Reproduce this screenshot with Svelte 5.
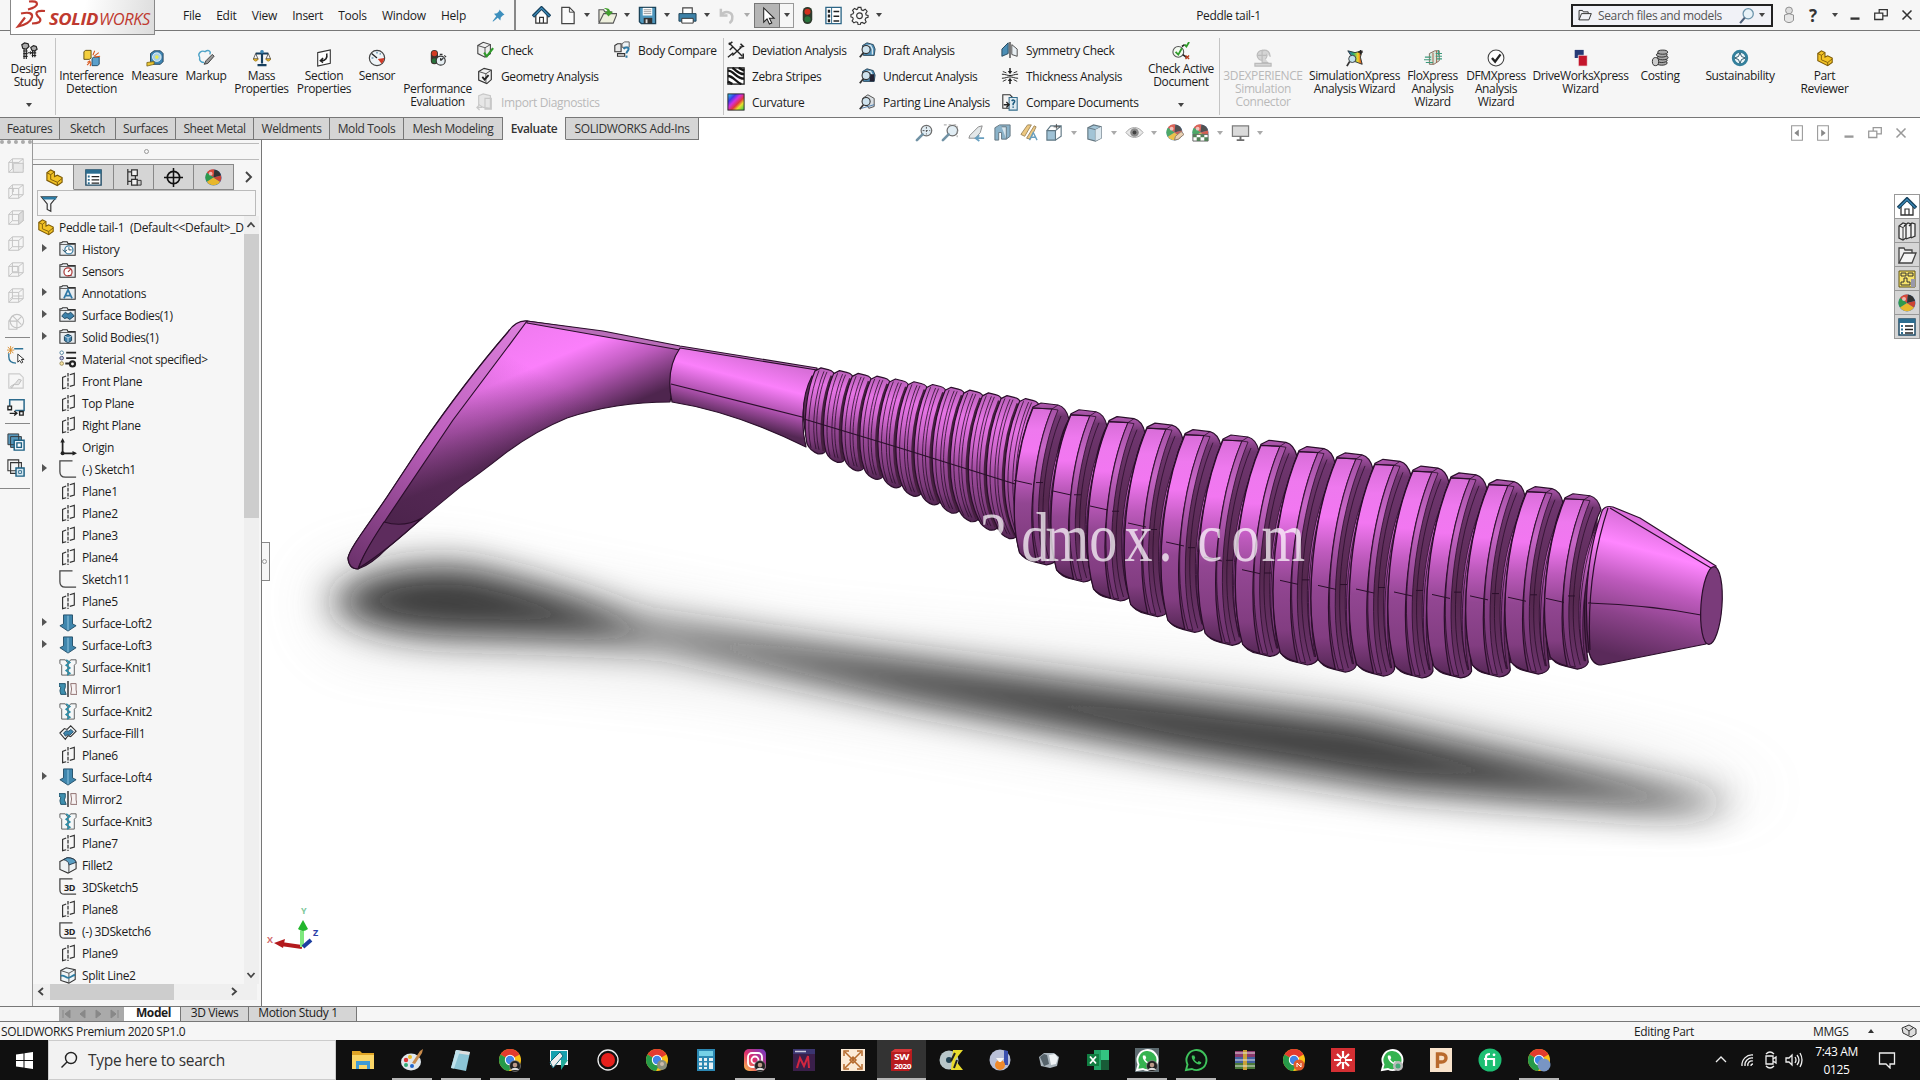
<script>
    const cube = (x) => `<g fill="none" stroke="#c4c4c4" stroke-width="1.1"><path d="M2 6h11v11H2zM6 2h12v11H6zM2 6l4-4M13 6l5-4M13 17l5-4M2 17l4-4"/>${x}</g>`
    const folder = (x) => `<path d="M1 17V3h2l1-1h5l1 2h8v13z" fill="#e9edf0" stroke="#333" stroke-width="1.2"/><path d="M1 5h17" stroke="#555"/>${x}`
    const chrome = (x) => `<circle cx="12" cy="12" r="11" fill="#fbc116"/><path d="M12 12L2.5 6.500A11 11 0 0 1 21.500 6.500z" fill="#e33b2e"/><path d="M12 12L2.500 6.500A11 11 0 0 0 11 23l4.500-8z" fill="#269a49"/><circle cx="12" cy="12" r="5.200" fill="#fff"/><circle cx="12" cy="12" r="4.200" fill="#4285e8"/>${x}`
    const whatsapp = (bg, ring) => `<path d="M2 22l1.500-5.500A10 10 0 1 1 8 21z" fill="${bg}" stroke="${ring}" stroke-width="1.900"/><path d="M8 7.500c-1.500 3 3.500 9 7.500 9 1.500-.3 2-1.500 1.700-2.200l-2.500-1.200-1.200 1.300c-1.500-.6-2.700-2-3.200-3.200l1-1.200-1-2.500z" fill="${ring}"/>`
    const face = `<circle cx="17" cy="18" r="5.500" fill="#222" stroke="#999" stroke-width=".6"/><circle cx="17" cy="17" r="2.300" fill="#b98"/><path d="M13 22c1-3 7-3 8 0z" fill="#ddd"/>`
    const ball = `<circle cx="10" cy="10" r="8.500" fill="#3a78c9"/><path d="M10 10L3 5a8.500 8.500 0 0 1 8-3.500z" fill="#d94a3a"/><path d="M10 10l1-8.500A8.500 8.500 0 0 1 18 8z" fill="#333"/><path d="M10 10L3 5a8.500 8.500 0 0 0 0 9.500z" fill="#2f9a4c"/><path d="M10 10L3 14.500a8.500 8.500 0 0 0 14 0z" fill="#e8b72c"/><path d="M10 10l8-2a8.500 8.500 0 0 1-1 6.500z" fill="#c43"/><circle cx="7" cy="6" r="2" fill="#fff" opacity=".6"/>`
    const part = `<path d="M2 5l4-3 4 2v5l3-1.500 5 2.500v5l-5 3.500L2 13z" fill="#f3c326" stroke="#7d5b08" stroke-width="1.200"/><path d="M2 5l4 2 4-3M6 7v5l7 3 5-4M13 15v3.500" fill="none" stroke="#7d5b08"/>`
    const list = `<path d="M2 2h16v16H2z" fill="#fff" stroke="#1f4b66" stroke-width="1.500"/><path d="M2 2h16v4H2z" fill="#2b6d90"/><path d="M8 9h8M8 12.500h8M8 16h8" stroke="#222" stroke-width="1.300"/><path d="M4 8h2v2H4zM4 11.500h2v2H4zM4 15h2v2H4z" fill="#2b6d90"/>`
    const home = `<path d="M4 9v9h12V9" fill="#fff" stroke="#333" stroke-width="1.300"/><path d="M8 18v-6h4v6" fill="none" stroke="#333" stroke-width="1.200"/><path d="M1 11l9-9 9 9" fill="none" stroke="#17405c" stroke-width="3.600"/><path d="M1.600 10.600L10 2.300l8.400 8.300" fill="none" stroke="#3b8dbd" stroke-width="1.300"/>`
    const lens = `<circle cx="12" cy="8" r="5.600" fill="#dcebf3" stroke="#555" stroke-width="1.300"/><path d="M8 12l-6 6" stroke="#5a8096" stroke-width="2.800" stroke-linecap="round"/>`
    const shape = (x) => `<path d="M5 5l5-3 7 2 2 5-1 7H6z" fill="#4d8db5" stroke="#2a4557"/><path d="M9 5l5 0 2 4v6" fill="none" stroke="#d9e8f0" stroke-width="1.500"/>${x}`
    const glass = `<circle cx="9" cy="9.500" r="4.500" fill="#cfe3ee" stroke="#333" stroke-width="1.200"/><path d="M6 13l-4 5" stroke="#333" stroke-width="2"/>`

    const icons = {
        home, part, list, ball,
        pin: `<path d="M11 2l7 7-2 .5-3 3-.5 4-3.500-3.500L3 18l-1-.5L7 11 4 7.500l4-.5 3-3z" fill="#3d8fbd"/>`,
        newdoc: `<path d="M4 1.500h8l5 5V18.500H4z" fill="#fbfbfb" stroke="#444" stroke-width="1.300"/><path d="M12 1.500v5h5" fill="none" stroke="#444"/>`,
        open: `<path d="M1 17V4h5l1 2h7v2" fill="#e8e8d8" stroke="#555" stroke-width="1.200"/><path d="M1 18l5-10h14l-4 10z" fill="#eef0dd" stroke="#555" stroke-width="1.200"/><path d="M6 2c5 0 6 1 7 4h3l-5 5-4-5h3c0-2-2-3-4-4z" fill="#43a02c"/>`,
        save: `<path d="M1.500 1.500h17v17h-15l-2-2z" fill="#4f97bd" stroke="#1c4359" stroke-width="1.400"/><path d="M5 2h10v8H5z" fill="#fff"/><path d="M6 4h8M6 6h8M6 8h8" stroke="#999"/><path d="M6 12.500h9v6H6z" fill="#333"/><path d="M8 14h2v4H8z" fill="#ddd"/>`,
        print: `<path d="M5 8V2h10v6" fill="#fff" stroke="#444" stroke-width="1.200"/><path d="M1 8h18v8H1z" fill="#3e82a8" stroke="#1f4256"/><path d="M4 13h12v5H4z" fill="#fff" stroke="#333"/>`,
        undo: `<path d="M3 3v7h7M3 10c4-6 13-4 12 3 0 2-1 4-3 5" fill="none" stroke="#c4c4c4" stroke-width="2.600"/>`,
        cursor: `<path d="M6 2v15l3.500-3.500L12 19l2.500-1-2.500-5h5z" fill="#fff" stroke="#222" stroke-width="1.100"/>`,
        traffic: `<rect x="5" y="1" width="10" height="18" rx="5" fill="#2e3a2c"/><circle cx="10" cy="6" r="3.200" fill="#d32f1e"/><circle cx="10" cy="14" r="3.200" fill="#28733b"/>`,
        props: `<path d="M2 1.500h16v17H2z" fill="#fff" stroke="#2d6687" stroke-width="1.400"/><path d="M8 2v16" stroke="#2d6687"/><path d="M4 4h2.500v3H4zM4 9h2.500v3H4zM4 14h2.500v3H4zM10 5h6v1.500h-6zM10 10h6v1.500h-6zM10 15h6v1.500h-6z" fill="#222"/>`,
        gear: `<path d="M8.500 1.500h3l.5 2.500 1.800.8 2.200-1.400 2 2.100L16.500 8l.5 1.500 2 .5v2l-2.300.7-.8 1.800 1.100 2.200-1.900 1.800-2.300-1.200-1.500.5-.6 2H8.600L8 17.300l-1.700-.7-2.200 1.200-1.900-2 1.200-2.200-.6-1.600L1 11.500V9l2.200-.7.700-1.700-1.200-2.100 2-2L6.900 3.800 8 3.300z" fill="#fafafa" stroke="#333" stroke-width="1.200"/><circle cx="10" cy="10.300" r="3" fill="none" stroke="#333" stroke-width="1.200"/>`,
        folder: `<path d="M1.500 17V3.500h5l1 2h7V8M1.500 17L5 8h14l-3.500 9z" fill="none" stroke="#333" stroke-width="1.400"/>`,
        search: `<circle cx="12" cy="8" r="6" fill="#e8f2f8" stroke="#6b94ab" stroke-width="1.500"/><path d="M8 12.500L2.500 19" stroke="#4c5f78" stroke-width="2.600"/>`,
        user: `<circle cx="10" cy="5" r="3.800" fill="#ddd" stroke="#888"/><path d="M5 10q5-3 10 0v6q-5 5-10 0z" fill="#e6e6e6" stroke="#888"/>`,
        study: `<g fill="#aaa" stroke="#222" stroke-width="1.300"><path d="M4.500 7v12M7 7v12M3.500 10h5M3.500 13h5M3.500 16h5"/><path d="M2 3l3-2 4 1 1 3-3 3-4-1z"/><path d="M14 9v8M16.500 9v8M13 12h5M13 15h5"/><path d="M12 6l3-2 3 1 1 3-3 2-3-1z"/></g><path d="M8.500 12h4M11 10.500l2 1.500-2 1.500" fill="none" stroke="#000"/>`,
        interference: `<path d="M1 3l2-1.500h6V10l-2 1.500H1z" fill="#f4cf3e" stroke="#5c4a0d"/><path d="M10 10.500l2-1.500h6v8l-2 1.500h-6z" fill="#5aa0cc" stroke="#1d4763"/><path d="M11 7l2-5M12.500 8l5-4M13 9l6-1M8 13l-3 2M8.500 14l-4 4M9 15l-1 4" stroke="#d9571c" stroke-width="1.200"/>`,
        measure: `<path d="M5 14V5l4-3h7l3 3v9l-3 3H8z" fill="#3f86b5" stroke="#1f3d52"/><circle cx="12" cy="9" r="4.800" fill="#a8d0e6" stroke="#fff" stroke-width=".8"/><circle cx="12" cy="9" r="2" fill="#e8e84e"/><path d="M1 15l8-1v3l-8 2z" fill="#e9c534" stroke="#6b5609" stroke-width=".8"/>`,
        markup: `<path d="M3 9c-3-4 2-8 6-6 4-3 7 0 5 3" fill="none" stroke="#4fa3c7" stroke-width="1.600"/><path d="M3 9c-1 4 2 6 5 6" fill="none" stroke="#4fa3c7" stroke-width="1.600"/><path d="M8 17l2-4 7-7 2 2-7 8z" fill="#999" stroke="#333"/>`,
        mass: `<path d="M10 2v14M3 5h14M5 18h10" stroke="#173f5e" stroke-width="2.400"/><path d="M3 5l-2.500 6h5zM17 5l-2.500 6h5z" fill="none" stroke="#333" stroke-width=".8"/><path d="M0 11h6q-3 5-6 0zM14 11h6q-3 5-6 0z" fill="#e8bb2e" stroke="#7b5a0d" stroke-width=".6"/><circle cx="10" cy="3" r="2" fill="#3d88b6"/>`,
        section: `<path d="M3 4l14-3v15L3 19z" fill="#fff" stroke="#333" stroke-width="1.200"/><path d="M13 5c1 5-1 8-6 8M9 10l-3 3 3 2" fill="none" stroke="#222" stroke-width="1.700"/>`,
        sensor: `<circle cx="10" cy="10" r="8.500" fill="#eef4f7" stroke="#444" stroke-width="1.300"/><path d="M10 10L4 5" stroke="#222" stroke-width="1.400"/><path d="M11 11l7-1a8 8 0 0 1-3 6.500z" fill="#d23b27"/><path d="M4 10h2M10 3v2M14 5l-1 1" stroke="#368" stroke-width="1.200"/>`,
        performance: `<rect x="2" y="1" width="8" height="16" rx="4" fill="#3c332f"/><circle cx="6" cy="5" r="3" fill="#d33b23"/><circle cx="6" cy="13" r="2.800" fill="#28733b"/><circle cx="13" cy="13" r="5" fill="#e6eef2" stroke="#333" stroke-width="1.300"/><path d="M13 13l3-3M13 13v-3M12 6h3M17 7l2 2" stroke="#333" stroke-width="1.300"/>`,
        check: `<path d="M2 5l6-3.500 8 2.500v10l-6 4-8-4z" fill="#eee" stroke="#444" stroke-width="1.200"/><path d="M2 5l8 2.500 6-3.500M10 7.500V18" fill="none" stroke="#444"/><path d="M9 13l3 4 7-9" fill="none" stroke="#2f9b2a" stroke-width="2.400"/>`,
        geometry: `<path d="M3 5l6-3.500 8 2v10.500l-5 4.500-9-4z" fill="#f4f4f4" stroke="#333" stroke-width="1.300"/><path d="M3 5l8 2.500 6-4M11 7.500V18" fill="none" stroke="#444"/><path d="M7 11l2.500 3L14 9" fill="none" stroke="#222" stroke-width="2"/>`,
        importd: `<g fill="#e6e6e6" stroke="#c8c8c8" stroke-width="1.300"><path d="M3 3l5-2 8 2v14l-8-1-5-3zM10 6h7v12h-7z"/><path d="M1 16h6M4 13l-3 3 3 3"/></g>`,
        compare: `<path d="M2 5l3-2h4v9H2zM5 14h8v3H5z" fill="#e8e8e8" stroke="#333" stroke-width="1.200"/><path d="M10 3l3-2h5v6h-8z" fill="#eef3f6" stroke="#555"/><path d="M12 9c1-3 7-2 5 1-1 2-2 2-2 4M15 16v2.500" fill="none" stroke="#2f7ba6" stroke-width="2.200"/>`,
        deviation: `<path d="M2 2l15 15M3 10l4-4M6 16l10-9M1 18l6-5" stroke="#222" stroke-width="1.500"/><path d="M2 4l4-3M15 3l3 3-4 1M18 14v5h-5" fill="none" stroke="#222" stroke-width="1.700"/>`,
        zebra: `<rect x="1" y="1" width="18" height="18" fill="#fff" stroke="#222" stroke-width="1.500"/><path d="M1 4c7 0 9 9 18 9M1 10c6 0 9 7 15 9M6 1c4 2 6 7 13 7M1 16l5 3M13 1l6 3" fill="none" stroke="#151515" stroke-width="2.600"/>`,
        curvature: `<rect x="1" y="1" width="18" height="18" fill="url(#rainbow)" stroke="#222" stroke-width="1"/>`,
        draft: shape(glass), undercut: shape(`<path d="M13 8h5v8h-5z" fill="#223"/>${glass}`), parting: `<path d="M5 6l6-4 7 4v9l-6 2z" fill="#d9dee2" stroke="#444"/><path d="M4 17l14-4" stroke="#47a"/>${glass}`,
        symmetry: `<path d="M1 17V9l7-7v12z" fill="#4b8eb5" stroke="#1f4256"/><path d="M10 1v18" stroke="#222" stroke-width="1.300"/><path d="M12 4l6 5v8l-6-2z" fill="#e8eff3" stroke="#444"/>`,
        thickness: `<path d="M1 8c4 0 6 1.500 9 1.500S15 8 19 8M1 12.500c4 0 6-1.500 9-1.500s5 1.500 9 1.500" fill="none" stroke="#222" stroke-width="1.100"/><path d="M10 1v5M10 19v-5" stroke="#222" stroke-width="1.700"/><path d="M7.500 4.500L10 8l2.500-3.500zM7.500 15.500L10 12l2.500 3.500z" fill="#222"/><path d="M2 5l4 1.500M18 5l-4 1.500M2 16l4-2M18 16l-4-2" stroke="#222"/>`,
        comparedoc: `<path d="M2 2h8l3 3v12H2z" fill="#f4f4f4" stroke="#333" stroke-width="1.200"/><path d="M9 5h9v14H9z" fill="#dfebf1" stroke="#346d8c" stroke-width="1.200"/><path d="M3 13h6M6 10l3 3-3 3" fill="none" stroke="#222" stroke-width="1.500"/><path d="M12 9c1-2 4-1 3 1l-1.500 2v1.500M13.500 15v1.500" fill="none" stroke="#1e5d80" stroke-width="1.700"/>`,
        active: `<circle cx="7" cy="11" r="6" fill="#f3faf1" stroke="#555" stroke-width="1.200"/><path d="M4 11l3 3 4-7" fill="none" stroke="#2f9b2a" stroke-width="2"/><path d="M11 5l3-2M12 14l4 3" stroke="#222" stroke-width="1.700"/><path d="M14 3l2 2 3-5" fill="none" stroke="#2f9b2a" stroke-width="2"/><path d="M15 15l4 4M19 15l-4 4" stroke="#b63a1b" stroke-width="1.500"/>`,
        dexp: `<g fill="#d5d5d5" stroke="#bbb" stroke-width="1.300"><circle cx="9" cy="7" r="5.500"/><path d="M9 1.500c6-1 9 2 9 7M9 7v8h7M1 16h18v3H1zM4 7h10M9 2v10"/></g>`,
        simx: `<path d="M2 2l8 2 8-2-2 7 2 8-8-3z" fill="url(#rainbow2)" stroke="#233"/><path d="M16 1v5M13.500 3.500h5" stroke="#222" stroke-width="1.400"/><circle cx="7" cy="11" r="4" fill="#bfe0ec" stroke="#333"/><path d="M4 14l-3 5" stroke="#333" stroke-width="2"/>`,
        flox: `<path d="M6 5l6-3h5v11l-6 4H6z" fill="#d4e8dd" stroke="#7c6455"/><path d="M10 4v13M14 2v13" stroke="#a2553c"/><path d="M1 9h7M0 12h8M2 15h8M13 5h7M13 8h7M14 11h6M16 1v6" stroke="#3c9a7c" stroke-width="1.200"/>`,
        dfmx: `<circle cx="10" cy="10" r="8.800" fill="#fdfdfd" stroke="#444" stroke-width="1.200"/><path d="M5.500 10l3.500 4 6-8" fill="none" stroke="#222" stroke-width="2.600"/>`,
        drivex: `<path d="M3 1h10v9H3z" fill="#273a76"/><path d="M7 7h10v12H7z" fill="#c4162c" stroke="#f6f6f6" stroke-width=".8"/>`,
        costing: `<g fill="#aaa" stroke="#333" stroke-width="1.100"><ellipse cx="12" cy="15.500" rx="6" ry="2.500"/><ellipse cx="12" cy="12.500" rx="6" ry="2.500"/><ellipse cx="13" cy="9.500" rx="6" ry="2.500"/><ellipse cx="12" cy="6.500" rx="6" ry="2.500"/><ellipse cx="13" cy="3.500" rx="5.500" ry="2.300"/><ellipse cx="5" cy="14" rx="3.500" ry="4.500" fill="#ccc"/></g>`,
        sustain: `<circle cx="10" cy="10" r="7.500" fill="#eef7fa" stroke="#34809c" stroke-width="3.200"/><path d="M10 4l1.700 4.300L16 10l-4.300 1.700L10 16l-1.700-4.300L4 10l4.300-1.700z" fill="#fff" stroke="#17485e"/>`,
        zoomfit: lens + `<path d="M12 4v8M8 8h8" stroke="#333" stroke-dasharray="2 1.500"/>`, zoomarea: lens + `<path d="M3 2h14v13" fill="none" stroke="#888" stroke-dasharray="3 2"/>`,
        prev: `<path d="M3 13l9-9 4-1-2 7-5 6H2z" fill="#e0e4e6" stroke="#777"/><path d="M10 16h8M13 13l-4 3 4 3" fill="none" stroke="#4e8fb5" stroke-width="1.800"/>`,
        sectionv: `<path d="M2 5l5-3h11v12l-4 3H9v-7H6v8H2z" fill="#77a6c1" stroke="#4a5f6b"/><path d="M9 4h5v13" fill="#cfe1eb" stroke="#4a5f6b"/>`,
        dynamic: `<path d="M2 12L9 2h4L6 14zM8 16l8-13 2 1-6 13z" fill="#eabf6a" stroke="#8f7442"/><path d="M11 18l4-8 4 8M12 15h6" fill="none" stroke="#4e8fb5" stroke-width="1.500"/>`,
        orient: `<path d="M2 8h9v10H2z" fill="#8fb8cf" stroke="#44606f" stroke-width="1.200"/><path d="M2 8l4-5h11v11l-6 4M11 8l6-5" fill="none" stroke="#44606f" stroke-width="1.200"/><path d="M12 1v5M9 4h7" stroke="#333"/>`,
        display: `<path d="M3 5l6-3 8 2v12l-6 3-8-2z" fill="#92bad0" stroke="#4a5f6b" stroke-width="1.200"/><path d="M3 5l8 2 6-3M11 7v12" fill="none" stroke="#4a5f6b"/><path d="M11 7l6-3v12l-6 3z" fill="#d7e5ed"/>`,
        eye: `<path d="M1 10c5-7 13-7 18 0-5 7-13 7-18 0z" fill="#e5e5e5" stroke="#999"/><circle cx="10" cy="10" r="4.500" fill="#777"/><circle cx="10" cy="10" r="2" fill="#222"/>`,
        appear: ball + `<path d="M10 18l1-4 6-5 3 3-6 5z" fill="#e7c9a5" stroke="#765"/>`, scene: ball + `<path d="M2 12h16v7H2z" fill="#fff" stroke="#444"/><path d="M2 12h4v3H2zM10 12h4v3h-4zM6 15h4v4H6zM14 15h4v4h-4z" fill="#346b3a"/>`,
        monitor: `<path d="M1.500 3h17v11h-17z" fill="#d4d4d4" stroke="#666" stroke-width="1.300"/><path d="M10 14v3M6 18h8" stroke="#555" stroke-width="2"/>`,
        panel1: `<path d="M4 2h12v16H4z" fill="#fff" stroke="#999" stroke-width="1.200"/><path d="M12 6v8l-5-4z" fill="#888"/>`, panel2: `<path d="M4 2h12v16H4z" fill="#fff" stroke="#999" stroke-width="1.200"/><path d="M8 6v8l5-4z" fill="#888"/>`,
        min: `<path d="M5 14h10" stroke="currentColor" stroke-width="2.600"/>`, restore: `<path d="M3 8h9v7H3zM8 8V4h9v7h-5" fill="none" stroke="currentColor" stroke-width="1.400"/>`, close: `<path d="M5 5l10 10M15 5L5 15" stroke="currentColor" stroke-width="1.700"/>`,
        c1: cube('<path d="M7 7h11v10H7z" fill="#e8e8e8"/>'), c2: cube('<path d="M3 6h4v4"/>'), c3: cube('<path d="M13 6l5-4v11l-5 4z" fill="#ddd"/>'), c4: cube(''), c5: cube('<path d="M6 6h6v6H6z"/>'), c6: cube('<path d="M3 14l4-4h10"/>'), c7: `<g fill="none" stroke="#c4c4c4" stroke-width="1.200"><circle cx="11" cy="9" r="7.500"/><path d="M2 9h9v9H2zM6 3l10 10M11 9l5-5M2 9l4-6"/></g>`,
        exitsk: `<path d="M8 3h10M2 8v4c0 5 3 7 8 7" fill="none" stroke="#2d7397" stroke-width="1.500"/><path d="M4 0v9M0 4.500h8M1 1l6 7M7 1L1 8" stroke="#d88b2a"/><path d="M12 9v9l2-2 2 3 1.500-1-1.500-3h3z" fill="#fff" stroke="#222"/>`,
        repair: `<path d="M2 2h12l4 4v12H2z" fill="none" stroke="#ccc" stroke-width="1.300"/><path d="M4 16l5-3 4-5 3 1-3 5H8l-3 4z" fill="#e3e3e3" stroke="#bbb"/>`,
        screencap: `<path d="M3 9V2h16v12H9" fill="none" stroke="#2d6b8d" stroke-width="1.700"/><path d="M1 9h4v4H1zM14 15h4v4h-4zM3 17h7M8 14.500l3 2.500-3 2.500" fill="none" stroke="#222" stroke-width="1.500"/>`,
        stack1: `<path d="M1 1h12v12H1zM4 4h12v12H4z" fill="#5797bb" stroke="#333"/><path d="M8 8h11v11H8z" fill="#eef5f9" stroke="#1d6083" stroke-width="1.600"/><path d="M11 11h5v5h-5z" fill="#fff" stroke="#1d6083" stroke-width="1.500"/>`,
        stack2: `<path d="M1 1h12v12H1zM4 4h12v12H4z" fill="#f4f4f4" stroke="#333" stroke-width="1.200"/><path d="M10 10h9v9h-9z" fill="#d3e6f0" stroke="#1d6083" stroke-width="1.600"/><path d="M13 13h3v3h-3z" fill="#fff" stroke="#1d6083"/>`,
        config: `<path d="M4 1v17M4 4h5M4 14h5M12 8v8" fill="none" stroke="#333" stroke-width="1.300"/><path d="M8 2h6v6H8zM8 12h6v6H8z" fill="#f2f2f2" stroke="#333" stroke-width="1.300"/><path d="M14 13h4v5h-4z" fill="#ccc" stroke="#333"/>`,
        target: `<circle cx="10" cy="10" r="6.500" fill="none" stroke="#111" stroke-width="1.800"/><path d="M10 0v20M0 10h20" stroke="#111" stroke-width="1.600"/>`,
        filter: `<path d="M1.500 2h17l-6.500 8v8l-4-2v-6z" fill="#f4f6f7" stroke="#333" stroke-width="1.300"/><path d="M2 2h16v3H4z" fill="#2c7ba4"/>`,
        history: folder('<circle cx="11" cy="11" r="4.500" fill="#fff" stroke="#3b7ea4" stroke-width="1.400"/><path d="M11 8v3h3M4 11l2.500 2L9 11" fill="none" stroke="#245"/>'),
        sensors: folder('<circle cx="10" cy="11" r="4.500" fill="#fff" stroke="#a33" stroke-width="1.300"/><path d="M10 11l3-3M10 15h4" stroke="#933" stroke-width="1.300"/>'),
        annot: folder('<path d="M5.500 16L10 6.500 14.500 16M7.300 13h5.400" fill="none" stroke="#2f78a6" stroke-width="1.900"/>'),
        surfb: folder('<path d="M3 11l4-4 3 2 3-2 4 4-5 4-3-2-3 1z" fill="#3d81aa" stroke="#1b4058"/>'),
        solidb: folder('<path d="M6 9l4-2 4 2v5l-4 2.500L6 14z" fill="#3d81aa" stroke="#173a50"/><path d="M6 9l4 2 4-2M10 11v5" fill="none" stroke="#cde"/>'),
        material: `<path d="M8 3h11M8 9h11M7 15h6" stroke="#222" stroke-width="2"/><circle cx="3" cy="3" r="2" fill="#fff" stroke="#4b7f9c"/><circle cx="3" cy="9" r="2" fill="#bcd" stroke="#447"/><circle cx="3" cy="15" r="2" fill="#f4e2a0" stroke="#985"/><circle cx="15" cy="15.500" r="2.800" fill="none" stroke="#222" stroke-width="2.400"/>`,
        plane: `<path d="M8 4.500L4 6v12.500l4-1M12 3l5-1.500v13L12 16" fill="none" stroke="#333" stroke-width="1.300"/><path d="M10 1v18" stroke="#222" stroke-width="1.300" stroke-dasharray="4 1.500"/>`,
        origin: `<path d="M4 3v14h14" fill="none" stroke="#222" stroke-width="1.900"/><path d="M1.500 5L4 0l2.500 5zM15 14.500l5 2.500-5 2.500z" fill="#222"/><circle cx="4" cy="17" r="2.200" fill="#222"/>`,
        sketch: `<path d="M15 1H1v12c0 4 2 6 6 6h12" fill="none" stroke="#444" stroke-width="1.400"/>`,
        sketch3d: `<path d="M15 1H1v12c0 4 2 5 5 5h13" fill="none" stroke="#444" stroke-width="1.400"/><text x="5.500" y="14" font-size="10" font-weight="700" fill="#222">3D</text>`,
        loft: `<path d="M5 1h10v10l4 2-9 6-9-6 4-2z" fill="#3f86ad" stroke="#1f4b64"/><path d="M10 2v16" stroke="#79b3d1" stroke-width="1.600"/>`,
        knit: `<path d="M1 2h6l3 4v13H3V8L1 6zM19 2h-6l-3 4v13h7V8l2-2z" fill="#f5f7f8" stroke="#555"/><path d="M8 2l4 3-4 3 4 3-4 3 4 3-3 2" fill="none" stroke="#2d8ea8" stroke-width="1.800"/>`,
        mirror: `<path d="M0 4h7v4l-1 3 2 5H2l-1-4 1-4-2-1z" fill="#3f8fae" stroke="#1d4f66"/><path d="M10 1v18" stroke="#222" stroke-width="1.500"/><path d="M13 4h6v7l1 5h-7l1-6z" fill="#f7f2f2" stroke="#866"/>`,
        fill: `<path d="M1 10l5-5 3 1 4-4 6 6-6 6-3-1-3 4z" fill="#f4f6f8" stroke="#333" stroke-width="1.200"/><path d="M5 10l3-2.500 3 .5 2-2 3 2.500-4 4-3-.5-2 1.500z" fill="#3f86ad" stroke="#1f4b64"/>`,
        fillet: `<path d="M1 6l8-4c6 0 9 2 10 5v7l-9 5-9-4z" fill="#eef2f4" stroke="#333" stroke-width="1.200"/><path d="M9 2c6 0 9 2 10 5l-8 3C11 6 8 5 5 4z" fill="#5a9fc4" stroke="#234"/><path d="M11 10v9" stroke="#333"/>`,
        split: `<path d="M2 5l6-3 10 2v11l-7 4-9-3z" fill="#eef4f7" stroke="#333" stroke-width="1.200"/><path d="M2 5l9 3 7-4M11 8v11" fill="none" stroke="#444"/><path d="M2 11c4-2 5 3 9 2s4-3 7-3" fill="none" stroke="#2d7ba0" stroke-width="2"/>`,
        library: `<path d="M2 5l4-3 3 1v14l-3 2-4-2zM7 5l4-3 3 1v13l-5 2M12 5l3-3 3 1v12l-4 2" fill="#f2f2f2" stroke="#333" stroke-width="1.300"/><path d="M2 5l4 1.500v12M6 6.500L9 4" fill="none" stroke="#333"/>`,
        explorer: `<path d="M2 18V3h5l1 2h7v3" fill="#eee" stroke="#444" stroke-width="1.300"/><path d="M2 18l5-10h12l-4 10z" fill="#f5f5f5" stroke="#444" stroke-width="1.300"/>`,
        palette: `<path d="M2 2h16v16H2z" fill="#f7e36b" stroke="#5e5313"/><path d="M4 4h5v3H4zM11 4h5v3h-5zM7 9h3v4h3v3H4v-3h3z" fill="#f7e36b" stroke="#333"/><path d="M14 10h4v8h-4z" fill="#99a"/>`,
    }

    const tools = [['home'], ['newdoc', 1], ['open', 1], ['save', 1], ['print', 1], ['undo', 1], ['cursor', 1], ['traffic'], ['props'], ['gear', 1]]
    const menus = ['File', 'Edit', 'View', 'Insert', 'Tools', 'Window', 'Help']
    const ribbon = [
        { w: 53, icon: 'study', label: 'Design\nStudy', high: true, caret: true },
        { sep: true },
        { w: 71, icon: 'interference', label: 'Interference\nDetection' },
        { w: 55, icon: 'measure', label: 'Measure' },
        { w: 48, icon: 'markup', label: 'Markup' },
        { w: 63, icon: 'mass', label: 'Mass\nProperties' },
        { w: 62, icon: 'section', label: 'Section\nProperties' },
        { w: 44, icon: 'sensor', label: 'Sensor' },
        { w: 77, icon: 'performance', label: '\nPerformance\nEvaluation' },
        { w: 137, rows: [['check', 'Check'], ['geometry', 'Geometry Analysis'], ['importd', 'Import Diagnostics', true]] },
        { w: 110, rows: [['compare', 'Body Compare']] },
        { sep: true },
        { w: 131, rows: [['deviation', 'Deviation Analysis'], ['zebra', 'Zebra Stripes'], ['curvature', 'Curvature']], inset: true },
        { w: 143, rows: [['draft', 'Draft Analysis'], ['undercut', 'Undercut Analysis'], ['parting', 'Parting Line Analysis']], inset: true },
        { w: 145, rows: [['symmetry', 'Symmetry Check'], ['thickness', 'Thickness Analysis'], ['comparedoc', 'Compare Documents']], inset: true },
        { w: 76, icon: 'active', label: 'Check Active\nDocument', high: true, caret: true },
        { sep: true },
        { w: 86, icon: 'dexp', label: '3DEXPERIENCE\nSimulation\nConnector', off: true },
        { w: 97, icon: 'simx', label: 'SimulationXpress\nAnalysis Wizard' },
        { w: 59, icon: 'flox', label: 'FloXpress\nAnalysis\nWizard' },
        { w: 68, icon: 'dfmx', label: 'DFMXpress\nAnalysis\nWizard' },
        { w: 101, icon: 'drivex', label: 'DriveWorksXpress\nWizard' },
        { w: 58, icon: 'costing', label: 'Costing' },
        { w: 102, icon: 'sustain', label: 'Sustainability' },
        { w: 67, icon: 'part', label: 'Part\nReviewer' },
    ]
    const tabs = [['Features', 60], ['Sketch', 56], ['Surfaces', 60], ['Sheet Metal', 78], ['Weldments', 76], ['Mold Tools', 74], ['Mesh Modeling', 99], ['Evaluate', 63], ['SOLIDWORKS Add-Ins', 133]]
    const hud = [['zoomfit'], ['zoomarea'], ['prev'], ['sectionv'], ['dynamic'], ['orient', 1], ['display', 1], ['eye', 1], ['appear'], ['scene', 1], ['monitor', 1]]
    const tree = [
        ['history', 'History', 1], ['sensors', 'Sensors'], ['annot', 'Annotations', 1], ['surfb', 'Surface Bodies(1)', 1], ['solidb', 'Solid Bodies(1)', 1],
        ['material', 'Material <not specified>'], ['plane', 'Front Plane'], ['plane', 'Top Plane'], ['plane', 'Right Plane'], ['origin', 'Origin'],
        ['sketch', '(-) Sketch1', 1], ['plane', 'Plane1'], ['plane', 'Plane2'], ['plane', 'Plane3'], ['plane', 'Plane4'], ['sketch', 'Sketch11'], ['plane', 'Plane5'],
        ['loft', 'Surface-Loft2', 1], ['loft', 'Surface-Loft3', 1], ['knit', 'Surface-Knit1'], ['mirror', 'Mirror1'], ['knit', 'Surface-Knit2'], ['fill', 'Surface-Fill1'],
        ['plane', 'Plane6'], ['loft', 'Surface-Loft4', 1], ['mirror', 'Mirror2'], ['knit', 'Surface-Knit3'], ['plane', 'Plane7'], ['fillet', 'Fillet2'],
        ['sketch3d', '3DSketch5'], ['plane', 'Plane8'], ['sketch3d', '(-) 3DSketch6'], ['plane', 'Plane9'], ['split', 'Split Line2'],
    ]

    // taskbar: [svg, underline, active]
    const apps = [
        ['<path d="M1 3h8l2 2h12v4H1z" fill="#e0a526"/><path d="M1 7h22v14H1z" fill="#fbd667"/><path d="M5 13h14v8h-3v-4H8v4H5z" fill="#3f9bd6"/>'],
        ['<ellipse cx="11" cy="14" rx="10" ry="8.500" fill="#dfe7ec"/><circle cx="6" cy="12" r="2.200" fill="#d33"/><circle cx="10" cy="9" r="2" fill="#e9bd2a"/><circle cx="6" cy="17" r="2" fill="#3a7"/><circle cx="12" cy="18" r="2" fill="#26c"/><path d="M12 15L20 3l3-2-1 4-7 11z" fill="#c98b4b"/>', 1],
        ['<path d="M7 2l14 2-4 19-15-3z" fill="#8cc5d6"/><path d="M7 2l14 2-1 3-14-2z" fill="#ddd"/><path d="M7 2L2 20l3 .6L11 3z" fill="#bfe2ec"/>', 1],
        [chrome(face), 1],
        ['<path d="M3 2h18v15H3z" fill="#f3f7f9"/><path d="M4 3h16v9H4z" fill="#15a0ae"/><path d="M3 14L13 4l3 4L6 20z" fill="#eee" stroke="#167" /><path d="M14 12h7l-7 10z" fill="#2a9"/>'],
        ['<circle cx="12" cy="12" r="10" fill="#111" stroke="#eee" stroke-width="1.300"/><circle cx="12" cy="12" r="7" fill="#e5201c"/>'],
        [chrome('<circle cx="17" cy="17" r="5" fill="#8a8f7c"/><circle cx="17" cy="16" r="2" fill="#cba"/>')],
        ['<path d="M3 1h18v22H3z" fill="#2b87b2"/><path d="M5 3h14v5H5z" fill="#75d0e6"/><g fill="#e9f1f4"><path d="M5 10h3v3H5zM10 10h3v3h-3zM15 10h4v3h-4zM5 14.500h3v3H5zM10 14.500h3v3h-3zM15 14.500h4V21h-4zM5 19h3v2H5zM10 19h3v2h-3z"/></g>'],
        ['<rect x="1" y="1" width="22" height="22" rx="5" fill="url(#insta)"/><rect x="5" y="5" width="14" height="14" rx="4" fill="none" stroke="#fff" stroke-width="1.800"/><circle cx="12" cy="12" r="3.500" fill="none" stroke="#fff" stroke-width="1.800"/>' + face, 1],
        ['<path d="M1 1h22v22H1z" fill="#3a1f4a"/><path d="M1 1h22v5H1z" fill="#3b3570"/><path d="M3 3.500h11" stroke="#ccd" stroke-width="1.500"/><path d="M5 20l3-10 4 8 4-10 1 12" fill="none" stroke="#d3263f" stroke-width="2"/>'],
        ['<path d="M0 1h24v22H0z" fill="#fbead6"/><path d="M4 4l16 16M20 4L4 20" stroke="#b56a2d" stroke-width="1.500"/><path d="M3 8V3h5M16 3h5v5M21 16v5h-5M8 21H3v-5M9 12l3-3 3 3-3 3z" fill="none" stroke="#b56a2d" stroke-width="1.500"/>'],
        ['<path d="M1 4l4-3h17v18l-3 4H1z" fill="#b81c1e"/><path d="M1 4l4-3h17l-3 3z" fill="#d8383a"/><text x="4" y="11.500" font-size="9" font-weight="700" fill="#fff" textLength="15" lengthAdjust="spacingAndGlyphs">SW</text><text x="4" y="21" font-size="6.500" font-weight="700" fill="#fff" textLength="17" lengthAdjust="spacingAndGlyphs">2020</text>', 1, 1],
        ['<circle cx="10" cy="12" r="9.500" fill="#b8c6c9"/><circle cx="10" cy="12" r="3" fill="#245"/><path d="M14 2l10 0-8 10 8 10H12z" fill="#e8db2c"/><path d="M16 5l-4 8M18 12l-3 8" stroke="#222" stroke-width="2"/>'],
        ['<circle cx="12" cy="12" r="10.500" fill="#b9c0d8"/><path d="M16 2l4 1v14h-4z" fill="#3a4fae"/><circle cx="12" cy="17" r="5" fill="#f08a2c"/><path d="M8 10h8l-3 4h-2z" fill="#f6f6f6"/>'],
        ['<path d="M2 9l5-4h10l5 4-2 9-7 2-9-2z" fill="#aab5bd"/><path d="M3 9l4-3 3 1 2 9-5 2z" fill="#56636b"/><path d="M12 7l6-1 3 4-2 6-5 1z" fill="#eef2f4"/>'],
        ['<path d="M8 2h15v20H8z" fill="#21a366"/><path d="M15 2h8v10h-8z" fill="#33c481"/><path d="M15 12h8v10h-8z" fill="#185c37"/><path d="M1 6h12v12H1z" fill="#107c41"/><path d="M4 8.500l6 7M10 8.500l-6 7" stroke="#fff" stroke-width="1.800"/>'],
        ['<path d="M0 0h24v24H0z" fill="#5d6b70"/>' + whatsapp('#35b350', '#fff') + face, 1],
        [whatsapp('#0c1410', '#3fc35c'), 1],
        ['<path d="M2 3h20v6H2z" fill="#8b3a6c"/><path d="M2 9h20v6H2z" fill="#43609f"/><path d="M2 15h20v6H2z" fill="#4c7a3c"/><path d="M10 2h4v20h-4z" fill="#c9a13a"/><path d="M2 5h20M2 12h20M2 18h20" stroke="#eee" stroke-width=".9"/>'],
        [chrome('<circle cx="17" cy="17" r="5.500" fill="#e05a2b"/><path d="M15 19v-4l4 4v-4" fill="none" stroke="#fff"/>')],
        ['<path d="M0 0h24v24H0z" fill="#d42f33"/><path d="M12 3v18M3 12h18M6 6l12 12M18 6L6 18" stroke="#fff" stroke-width="2.200" stroke-dasharray="7 4"/><circle cx="12" cy="12" r="2" fill="#d42f33"/>'],
        [whatsapp('#35b350', '#fff') + '<circle cx="18" cy="18" r="5" fill="#bbb"/><circle cx="18" cy="18" r="2.500" fill="#4a7"/>'],
        ['<path d="M1 0h22v24H1z" fill="#f8e3cb"/><path d="M8.500 20V6h4c6 0 6 8 0 8h-4" fill="none" stroke="#b96a2c" stroke-width="3.400"/>'],
        ['<circle cx="12" cy="12" r="11.500" fill="#1dbf73"/><path d="M8 18V9c0-3 2-3 4-3M6 11h10v7" fill="none" stroke="#fff" stroke-width="2.200"/><circle cx="16" cy="6.800" r="1.400" fill="#fff"/>'],
        [chrome('<circle cx="17" cy="17" r="6.500" fill="#7895c4"/>'), 1],
    ]

    const lerp = (a, b, t) => a + (b - a) * t
    // interpolate a silhouette given as [x, y] points
    function along(pts, x) {
        let i = 1
        while (i < pts.length - 1 && pts[i][0] < x) i++
        const [a, b] = [pts[i - 1], pts[i]]
        return lerp(a[1], b[1], (x - a[0]) / (b[0] - a[0]))
    }
    const topEdge = [[816, 369], [1010, 398], [1053, 405], [1125, 418], [1201, 431], [1280, 442], [1393, 461], [1505, 481], [1575, 494]]
    const bottomEdge = [[811, 448], [1013, 540], [1043, 563], [1085, 582], [1123, 601], [1162, 617], [1198, 632], [1236, 645], [1273, 656], [1313, 665], [1350, 672], [1387, 676], [1425, 678], [1463, 678], [1503, 677], [1543, 674], [1580, 669]]
    const midEdge = [[810, 419], [900, 450], [1013, 483], [1060, 496], [1120, 522], [1180, 552], [1270, 582], [1330, 590], [1420, 597], [1500, 600], [1600, 603]]

    const arc = (x, t, b, lean) => `C${x - (b - t) * 0.115} ${lerp(t, b, 0.27)} ${x - (b - t) * 0.17} ${lerp(t, b, 0.72)} ${x - lean} ${b}`
    const back = (x, t, b, lean) => `C${x - (b - t) * 0.17} ${lerp(t, b, 0.72)} ${x - (b - t) * 0.115} ${lerp(t, b, 0.27)} ${x} ${t}`

    const big = Array.from({ length: 15 }, (_, i) => {
        const x = 1047 + i * 38
        const t = along(topEdge, x)
        const b = along(bottomEdge, x)
        const l = (b - t) * 0.09 - 1
        const x0 = x - 14
        return {
            body: `M${x0} ${t + 3}${arc(x0, t + 3, b - 13, l)}Q${x0 - l + 4} ${b - 5} ${x0 - l + 15} ${b - 3}L${x0 - l + 27} ${b}Q${x0 - l + 36} ${b - 1} ${x0 - l + 38} ${b - 7}C${x0 + 16} ${lerp(t, b, 0.72)} ${x0 + 19} ${lerp(t, b, 0.27)} ${x0 + 36} ${t + 15}Q${x0 + 33} ${t + 3} ${x0 + 25} ${t + 1}L${x0 + 8} ${t - 1}Z`,
            face: `M${x0} ${t + 4}${arc(x0, t + 4, b - 12, l)}Q${x0 - l + 5} ${b - 6} ${x0 - l + 17} ${b - 3}${back(x0 + 19, t + 5, b - 3, l)}Z`,
            lip: `M${x0 + 19} ${t + 5}${arc(x0 + 19, t + 5, b - 3, l - 1)}L${x0 - l + 25} ${b - 2}${back(x0 + 25, t + 6, b - 2, l)}Z`,
            floor: `M${x0 + 31} ${t + 32}${arc(x0 + 31, t + 28, b - 8, l - 4)}L${x0 - l + 35} ${b - 9}${back(x0 + 37, t + 27, b - 9, l)}Q${x0 + 33} ${t + 26} ${x0 + 31} ${t + 32}Z`,
            lines: `M${x0 + 33} ${t + 29}${arc(x0 + 33, t + 29, b - 8, l - 1)}M${x0 + 28} ${t + 12}${arc(x0 + 28, t + 12, b - 4, l - 2)}M${x0} ${t + 4}L${x0 + 19} ${t + 5}L${x0 + 25} ${t + 1}`,
            mid: `M${x0 - 19} ${along(midEdge, x0 - 19) - 3}l18 4M${x0 + 3} ${along(midEdge, x0) - 6}h7`,
        }
    })
    const small = Array.from({ length: 12 }, (_, i) => {
        const x = 815 + i * 18.6
        const t = along(topEdge, x)
        const b = along(bottomEdge, x)
        const l = 8 - i * 0.5
        return {
            body: `M${x} ${t + 2}${arc(x, t + 2, b - 6, l)}Q${x - l + 3} ${b + 1} ${x - l + 11} ${b + 4}Q${x - l + 18} ${b + 5} ${x - l + 19} ${b - 1}L${x + 21} ${t + 9}Q${x + 19} ${t + 2} ${x + 14} ${t + 1}L${x + 6} ${t - 1}Z`,
            lines: [4, 9, 12].map((d) => `M${x + d} ${t + 1 + d / 6}${arc(x + d, t + 2, b + d / 4 - 3, l)}`).join(''),
            dark: `M${x + 17} ${t + 7}${arc(x + 17, t + 7, b + 1, l)}`,
        }
    })
</script>

{#snippet icon(name, size = 20)}
    <svg class="icon" width={size} height={size} viewBox="0 0 20 20">{@html icons[name]}</svg>
{/snippet}

<div class="app">
    <svg class="defs" width="0" height="0">
        <defs>
            <linearGradient id="rainbow" x1="0" y1="0" x2="1" y2="1"><stop offset="0" stop-color="#23d5e8" /><stop offset=".25" stop-color="#3b39e8" /><stop offset=".42" stop-color="#d22fe0" /><stop offset=".6" stop-color="#e3363a" /><stop offset=".75" stop-color="#e8df2f" /><stop offset="1" stop-color="#2ccf46" /></linearGradient>
            <linearGradient id="rainbow2"><stop offset="0" stop-color="#2d4fc9" /><stop offset=".4" stop-color="#2db36b" /><stop offset=".7" stop-color="#f0d52a" /><stop offset="1" stop-color="#d92f1e" /></linearGradient>
            <linearGradient id="insta" x1="0" y1="1" x2="1" y2="0"><stop offset="0" stop-color="#fdc84c" /><stop offset=".45" stop-color="#e1306c" /><stop offset="1" stop-color="#6a3cc8" /></linearGradient>
        </defs>
    </svg>

    <header class="titlebar">
        <div class="logo">
            <svg width="143" height="33" viewBox="10 0 143 33">
                <g fill="none" stroke="#c0392f" stroke-width="2.200">
                    <path d="M28 1.500q8-1 8 2.500 0 3-9 5.500" />
                    <path d="M20 13.500q12-2.500 11 3.500-2 7-14 9.500l7-9" />
                    <path d="M44 11q-9-1-8.500 3 .5 2 3.500 4.500 2 5-8 5" />
                </g>
                <g fill="#bf3a30" font-size="16.500" font-style="italic">
                    <text x="48" y="25" font-weight="700" textLength="49" lengthAdjust="spacingAndGlyphs">SOLID</text>
                    <text x="98" y="25" textLength="51" lengthAdjust="spacingAndGlyphs">WORKS</text>
                </g>
            </svg>
        </div>
        <nav class="menus">
            {#each menus as m}<span>{m}</span>{/each}
        </nav>
        <div class="pin">{@render icon('pin', 15)}</div>
        <div class="quick">
            {#each tools as [name, caret]}
                <div class="tool" class:selected={name === 'cursor'}>
                    <span class="cell">{@render icon(name, 19)}</span>
                    {#if caret}<i class="caret" class:dim={name === 'undo'}></i>{/if}
                </div>
            {/each}
        </div>
        <div class="doc-title">Peddle tail-1</div>
        <div class="search">
            {@render icon('folder', 14)}
            <span>Search files and models</span>
            {@render icon('search', 17)}
            <i class="caret"></i>
        </div>
        <div class="win">
            {@render icon('user', 18)}
            <b>?</b>
            <i class="caret"></i>
            {@render icon('min', 18)}
            {@render icon('restore', 18)}
            {@render icon('close', 18)}
        </div>
    </header>

    <section class="ribbon">
        {#each ribbon as item}
            {#if item.sep}
                <div class="sep"></div>
            {:else if item.rows}
                <div class="stack" class:inset={item.inset} style:width="{item.w}px">
                    {#each item.rows as [name, label, off]}
                        <div class="stack-row" class:off>{@render icon(name, 18)}<span>{label}</span></div>
                    {/each}
                </div>
            {:else}
                <div class="command" class:high={item.high} class:off={item.off} style:width="{item.w}px">
                    {@render icon(item.icon, 18)}
                    <span class="command-label">{item.label}</span>
                    {#if item.caret}<i class="caret"></i>{/if}
                </div>
            {/if}
        {/each}
    </section>

    <div class="tabs">
        {#each tabs as [label, w]}
            <div class="tab" class:current={label === 'Evaluate'} style:width="{w}px">{label}</div>
        {/each}
        <div class="tabs-rest"></div>
    </div>

    <main class="workspace">
        <aside class="strip">
            {#each ['c1', 'c2', 'c3', 'c4', 'c5', 'c6', 'c7'] as c}<div>{@render icon(c, 18)}</div>{/each}
            <hr />
            {#each ['exitsk', 'repair', 'screencap'] as c}<div>{@render icon(c, 18)}</div>{/each}
            <hr class="lower" />
            {#each ['stack1', 'stack2'] as c}<div>{@render icon(c, 18)}</div>{/each}
            <hr class="wide" />
        </aside>

        <aside class="panel">
            <div class="grip"><span></span></div>
            <div class="panel-tabs">
                {#each ['part', 'list', 'config', 'target', 'ball'] as name, i}
                    <div class="panel-tab" class:current={i === 0}>{@render icon(name, 19)}</div>
                {/each}
                <svg class="more" width="26" height="26" viewBox="0 0 26 26"><path d="M11 8l5 5-5 5" fill="none" stroke="#444" stroke-width="1.900" /></svg>
            </div>
            <div class="filter">{@render icon('filter', 18)}</div>
            <div class="tree-wrap">
                <div class="tree">
                    <div class="root">{@render icon('part', 18)}<span>Peddle tail-1&nbsp; (Default&lt;&lt;Default&gt;_D</span></div>
                    {#each tree as [name, label, open]}
                        <div class="node">
                            <span class="arrow">{#if open}<i></i>{/if}</span>
                            {@render icon(name, 18)}
                            <span>{label}</span>
                        </div>
                    {/each}
                </div>
                <div class="vbar">
                    <svg width="14" height="18" viewBox="0 0 14 18"><path d="M3.500 11L7 7l3.500 4" fill="none" stroke="#444" stroke-width="1.800" /></svg>
                    <div class="vthumb"></div>
                    <svg width="14" height="18" viewBox="0 0 14 18"><path d="M3.500 7L7 11l3.500-4" fill="none" stroke="#444" stroke-width="1.800" /></svg>
                </div>
            </div>
            <div class="hbar">
                <svg width="16" height="15" viewBox="0 0 16 15"><path d="M10 4L6 7.500 10 11" fill="none" stroke="#444" stroke-width="1.800" /></svg>
                <div class="hthumb"></div>
                <svg width="16" height="15" viewBox="0 0 16 15"><path d="M6 4l4 3.500L6 11" fill="none" stroke="#444" stroke-width="1.800" /></svg>
            </div>
        </aside>

        <section class="viewport">
            <svg class="scene" width="1658" height="866" viewBox="262 140 1658 866">
                <defs>
                    <filter id="soft" x="-20%" y="-60%" width="140%" height="220%"><feGaussianBlur stdDeviation="18" /></filter>
                    <filter id="softer" x="-20%" y="-60%" width="140%" height="220%"><feGaussianBlur stdDeviation="32" /></filter>
                    <linearGradient id="face" x1="0" y1="0" x2="0" y2="1"><stop offset="0" stop-color="#d86dd8" /><stop offset=".14" stop-color="#ee79ee" /><stop offset=".28" stop-color="#f277f1" /><stop offset=".45" stop-color="#bd5abc" /><stop offset=".62" stop-color="#924692" /><stop offset=".85" stop-color="#823d81" /><stop offset="1" stop-color="#562856" /></linearGradient>
                    <linearGradient id="faceSmall" x1="0" y1="0" x2="0" y2="1"><stop offset="0" stop-color="#b75fb7" /><stop offset=".2" stop-color="#e674e5" /><stop offset=".38" stop-color="#cf66ce" /><stop offset=".58" stop-color="#9c4a9b" /><stop offset=".85" stop-color="#7b3a7a" /><stop offset="1" stop-color="#522652" /></linearGradient>
                    <linearGradient id="lip" x1="0" y1="0" x2="0" y2="1"><stop offset="0" stop-color="#a551a5" /><stop offset=".25" stop-color="#c766c6" /><stop offset=".6" stop-color="#873f87" /><stop offset="1" stop-color="#6d336d" /></linearGradient>
                    <linearGradient id="side" x1="0" y1="0" x2="0" y2="1"><stop offset="0" stop-color="#b65bb6" /><stop offset=".08" stop-color="#703670" /><stop offset=".6" stop-color="#55284f" /><stop offset="1" stop-color="#6b336b" /></linearGradient>
                    <linearGradient id="tail" gradientUnits="userSpaceOnUse" x1="518" y1="322" x2="565" y2="432"><stop offset="0" stop-color="#ee7aee" /><stop offset=".4" stop-color="#fb7ffb" /><stop offset=".65" stop-color="#bf5cbf" /><stop offset="1" stop-color="#4e254e" /></linearGradient>
                    <linearGradient id="tailLow" gradientUnits="userSpaceOnUse" x1="500" y1="350" x2="395" y2="535"><stop offset="0" stop-color="#5a2b5a" stop-opacity="0" /><stop offset=".6" stop-color="#5a2b5a" stop-opacity=".5" /><stop offset="1" stop-color="#4a224a" stop-opacity=".8" /></linearGradient>
                    <linearGradient id="rim" gradientUnits="userSpaceOnUse" x1="520" y1="320" x2="352" y2="565"><stop offset="0" stop-color="#dc7fdc" /><stop offset=".5" stop-color="#bd60bd" /><stop offset="1" stop-color="#6c326c" /></linearGradient>
                    <linearGradient id="neck" gradientUnits="userSpaceOnUse" x1="752" y1="357" x2="735" y2="421"><stop offset="0" stop-color="#d96fd9" /><stop offset=".35" stop-color="#fb80fb" /><stop offset=".7" stop-color="#b153b1" /><stop offset="1" stop-color="#542854" /></linearGradient>
                    <linearGradient id="head" gradientUnits="userSpaceOnUse" x1="1675" y1="530" x2="1640" y2="662"><stop offset="0" stop-color="#dd70dd" /><stop offset=".2" stop-color="#ff86ff" /><stop offset=".46" stop-color="#bd5abc" /><stop offset=".7" stop-color="#8c438b" /><stop offset="1" stop-color="#5a2a5a" /></linearGradient>
                </defs>

                <path d="M315 590Q400 545 520 585L800 640L1250 680L1600 750L1780 795L1500 790L1100 745L700 675L340 640Z" fill="#888" opacity=".28" filter="url(#softer)" />
                <path d="M328 602Q380 560 470 568Q560 588 640 622L860 654L1110 688L1360 720L1560 766L1735 803Q1700 816 1600 805L1400 789L1180 753L900 698L660 644Q560 638 460 636Q370 634 328 602Z" fill="#1c1c1c" opacity=".86" filter="url(#soft)" />

                <g stroke="#2b0f2b" stroke-width="1.200" stroke-linejoin="round">
                    <path d="M527 321Q516 321 508 332C470 376 440 418 420 447L387 497C366 528 350 548 348 558Q349 569 358 569Q372 564 387 548L420 520L460 487Q480 473 503 455Q533 432 567 418Q615 402 670 402L680 347L603 332Z" fill="url(#tail)" />
                    <path d="M527 321Q516 321 508 332C470 376 440 418 420 447L387 497L348 558Q349 569 358 569Q372 564 420 520L460 487Q480 473 503 455Q533 432 567 418L620 400L680 347Z" fill="url(#tailLow)" stroke="none" />
                    <path d="M527 321Q516 320 508 332C470 376 440 418 420 447L387 497C366 528 350 548 348 558Q349 569 358 569Q360 560 387 518L453 420L507 348Z" fill="url(#rim)" />
                    <path d="M384 522Q404 528 422 518Q385 552 359 568Q361 557 384 522Z" fill="#5d2c5d" />
                    <path d="M527 321L603 331L680 346L817 368L817 371L680 350L527 323Z" fill="#b96db9" />
                    <path d="M680 348L817 370Q796 405 806 447Q735 412 672 402Q665 370 680 348Z" fill="url(#neck)" />
                    <path d="M671 384L806 418" fill="none" />
                    <path d="M812 376L1034 412L1060 545L1018 538L808 443Q797 405 812 376Z" fill="#5e2e5a" />
                    <path d="M1020 416L1280 460L1598 514L1592 652L1540 662L1440 666L1340 656L1240 632L1140 596L1030 545Z" fill="#502650" stroke="none" />
                    {#each small as r}
                        <path d={r.body} fill="url(#faceSmall)" />
                        <path d={r.dark} fill="none" stroke="#45203f" stroke-width="3" />
                        <path d={r.lines} fill="none" stroke-width=".8" />
                    {/each}
                    <path d="M804 419L900 448L1015 484" fill="none" />
                    {#each big as r}
                        <path d={r.body} fill="url(#side)" />
                        <path d={r.floor} fill="url(#lip)" stroke-width=".8" />
                        <path d={r.face} fill="url(#face)" />
                        <path d={r.lip} fill="url(#lip)" stroke-width=".8" />
                        <path d={r.lines} fill="none" stroke-width=".8" />
                        <path d={r.mid} fill="none" stroke-width="1" />
                    {/each}
                    <path d="M1602 511Q1605 505 1613 507L1640 518L1716 566L1706 644L1601 665Q1592 665 1589 652Q1580 575 1602 511Z" fill="url(#head)" />
                    <path d="M1608 508Q1586 575 1590 650M1588 603Q1650 605 1701 615M1610 508L1711 568" fill="none" />
                    <ellipse cx="1711.500" cy="605.500" rx="10.500" ry="39" transform="rotate(4 1711 605)" fill="#7a3b7a" />
                </g>

                <text class="watermark" transform="scale(.8 1)" y="561" x="1242 1294 1334 1379 1423 1457 1481 1512 1557 1604">3dmox. com</text>

                <g class="triad">
                    <path d="M302 947L281 944" stroke="#b3191c" stroke-width="4" /><path d="M274 943l11-4-2 9z" fill="#b3191c" />
                    <path d="M302 947V931" stroke="#7ee87e" stroke-width="4" /><path d="M298 929l5-9 5 9q-5 4-10 0z" fill="#22b62c" />
                    <path d="M303 947l8-7" stroke="#1c3fa0" stroke-width="4" />
                    <text x="267" y="943" fill="#d26a6a">X</text><text x="301" y="914" fill="#7cc79a">Y</text><text x="313" y="936" fill="#2c3fa8">Z</text>
                </g>
            </svg>
            <div class="hud">
                {#each hud as [name, caret]}
                    <span class="cell">{@render icon(name, 19)}</span>
                    {#if caret}<i class="caret"></i>{/if}
                {/each}
            </div>
            <div class="doc-win">
                {#each ['panel1', 'panel2', 'min', 'restore', 'close'] as name}<span class="cell">{@render icon(name, 18)}</span>{/each}
            </div>
            <div class="handle"><span></span></div>
            <div class="taskpane">
                {#each ['home', 'library', 'explorer', 'palette', 'ball', 'list'] as name, i}
                    <div class:current={i === 0}>{@render icon(name, 20)}</div>
                {/each}
            </div>
        </section>
    </main>

    <div class="bottom-tabs">
        <div class="nav">
            {#each ['M4 3v8M11 3L6 7l5 4z', 'M10 3L5 7l5 4z', 'M5 3l5 4-5 4z', 'M11 3v8M4 3l5 4-5 4z'] as d}
                <svg width="16" height="14" viewBox="0 0 16 14"><path {d} fill="#888" stroke="#888" /></svg>
            {/each}
        </div>
        <div class="sheet current">Model</div>
        <div class="sheet views">3D Views</div>
        <div class="sheet motion">Motion Study 1</div>
    </div>

    <footer class="status">
        <span class="product">SOLIDWORKS Premium 2020 SP1.0</span>
        <span class="mode">Editing Part</span>
        <span class="units">MMGS</span>
        <i class="up"></i>
        <svg width="16" height="14" viewBox="0 0 16 14"><path d="M1 4l7-3 7 4v5l-5 3-8-4z" fill="#ddd" stroke="#333" /><path d="M4 4l4 3 4-3M8 7v4" fill="none" stroke="#333" /></svg>
    </footer>

    <div class="taskbar">
        <div class="start"><svg width="17" height="17" viewBox="0 0 17 17"><path d="M0 2.500l7.500-1V8H0zM8.500 1.300L17 0v8H8.500zM0 9h7.500v6.500L0 14.500zM8.500 9H17v8l-8.500-1.200z" fill="#fff" /></svg></div>
        <div class="type-here">
            <svg width="18" height="18" viewBox="0 0 18 18"><circle cx="11" cy="7" r="5.500" fill="none" stroke="#222" stroke-width="1.400" /><path d="M7 11L1.500 16.500" stroke="#222" stroke-width="1.400" /></svg>
            <span>Type here to search</span>
        </div>
        <div class="apps">
            {#each apps as [svg, running, active]}
                <div class="app-button" class:running class:active><svg width="24" height="24" viewBox="0 0 24 24">{@html svg}</svg></div>
            {/each}
        </div>
        <div class="tray">
            <svg width="92" height="20" viewBox="0 0 92 20" fill="none" stroke="#eee" stroke-width="1.300">
                <path d="M5 12l5-5 5 5" />
                <path d="M31 16a10 10 0 0 1 11-11M34 16a7 7 0 0 1 8-8M37 16a4 4 0 0 1 5-5M40 16q0-2 2-2" />
                <path d="M55 6h7v8h-7zM62 9l3-2v6l-3-2M55 4q4-4 8 0M55 16q4 4 8 0" />
                <path d="M75 8h3l3-3v10l-3-3h-3zM84 7q2 3 0 6M86 5q4 5 0 10M89 3q4 7 0 14" />
            </svg>
            <div class="clock"><span>7:43 AM</span><span>0125</span></div>
            <svg width="18" height="18" viewBox="0 0 18 18"><path d="M1.500 2h15v11H12v4l-4-4H1.500z" fill="none" stroke="#eee" stroke-width="1.300" /></svg>
        </div>
    </div>
</div>

<style>
    :global(body){
        overflow:hidden;
    }
    .app{
        width:1920px;
        height:1080px;
        display:flex;
        flex-direction:column;
        background-color:#f6f6f6;
        color:#1c1c1c;
        font-family:"Open Sans", "Noto Sans", sans-serif;
        font-size:12px;
        letter-spacing:-.37px;
        line-height:13px;
        white-space:nowrap;
        overflow:hidden;
    }
    .app, .app *{
        box-sizing:border-box;
    }
    .defs{
        position:absolute;
    }
    .icon{
        display:block;
        flex:none;
    }
    .caret{
        width:14px;
        display:flex;
        justify-content:center;
        flex:none;
    }
    .caret::after{
        content:"";
        border:3px solid transparent;
        border-top:4px solid #444;
        border-bottom:0;
    }
    .caret.dim::after, .hud .caret::after{
        border-top-color:#aaa;
    }
    .cell{
        width:26px;
        display:flex;
        justify-content:center;
        align-items:center;
    }

    .titlebar{
        height:31px;
        flex:none;
        display:flex;
        align-items:center;
        border-bottom:1px solid #777;
    }
    .logo{
        width:145px;
        height:35px;
        margin-left:10px;
        align-self:flex-start;
        position:relative;
        z-index:1;
        border:1px solid #888;
        border-top:0;
        background:linear-gradient(100deg, #fff 50%, #dcdcdc);
    }
    .menus{
        width:283px;
        margin-left:28px;
        display:flex;
        justify-content:space-between;
        letter-spacing:-.25px;
    }
    .pin{
        width:50px;
        height:30px;
        padding:8px 0 0 25px;
        border-right:2px solid #888;
    }
    .quick{
        margin-left:12px;
        display:flex;
    }
    .tool{
        height:25px;
        display:flex;
        align-items:center;
    }
    .tool.selected{
        box-shadow:inset 0 0 0 1px #999;
    }
    .tool.selected .cell{
        height:25px;
        background-color:#b5b5b5;
        border:1px solid #777;
    }
    .doc-title{
        width:685px;
        text-align:center;
    }
    .search{
        width:202px;
        height:23px;
        padding-left:5px;
        display:flex;
        align-items:center;
        border:2px solid #222;
        background-color:#f1f2f7;
        color:#555;
    }
    .search span{
        width:146px;
        padding-left:6px;
    }
    .win{
        margin-left:7px;
        display:flex;
        align-items:center;
        color:#333;
    }
    .win b{
        width:26px;
        padding-left:11px;
        font-size:17px;
    }
    .win .caret{
        margin:0 4px 0 4px;
    }
    .win .icon + .icon{
        margin-left:8px;
    }

    .ribbon{
        height:87px;
        flex:none;
        display:flex;
        padding-left:2px;
        border-bottom:1px solid #777;
    }
    .sep{
        width:1px;
        margin-top:7px;
        height:77px;
        background-color:#c4c4c4;
    }
    .command{
        display:flex;
        flex-direction:column;
        align-items:center;
        padding-top:18px;
    }
    .command.high{
        padding-top:11px;
    }
    .command-label{
        padding-top:2px;
        text-align:center;
        white-space:pre;
    }
    .high .caret{
        margin-top:15px;
    }
    .off{
        color:#b9b9b9;
    }
    .stack{
        padding-top:6px;
    }
    .stack.inset{
        padding-left:3px;
    }
    .stack-row{
        height:26px;
        display:flex;
        align-items:center;
        gap:7px;
    }

    .tabs{
        height:22px;
        flex:none;
        display:flex;
    }
    .tab{
        display:flex;
        align-items:center;
        justify-content:center;
        background-color:#d5d5d5;
        border-right:1px solid #777;
        border-bottom:1px solid #777;
        color:#333;
    }
    .tab.current{
        margin-top:-1px;
        background-color:#f6f6f6;
        border-bottom-color:#f6f6f6;
        font-weight:600;
    }
    .tabs-rest{
        flex:1;
        background-color:#fff;
    }

    .workspace{
        height:866px;
        flex:none;
        display:grid;
        grid-template-columns:32px 230px 1fr;
    }
    .strip{
        padding-top:9px;
        border-top:4px dotted #aaa;
    }
    .strip div{
        height:26px;
        padding-left:7px;
        display:flex;
        align-items:center;
    }
    .strip hr{
        height:1px;
        margin:2px 2px 4px 5px;
        border:0;
        background-color:#888;
    }
    .strip hr.lower{
        margin:3px 2px 5px 5px;
    }
    .strip hr.wide{
        margin:7px 2px 0 0;
    }
    .panel{
        display:flex;
        flex-direction:column;
        border-left:1px solid #999;
        border-right:1px solid #777;
    }
    .grip{
        height:17px;
        margin:3px 2px 4px 0;
        display:flex;
        align-items:center;
        justify-content:center;
        border:1px solid #bbb;
        border-width:1px 0;
    }
    .grip span, .handle span{
        width:5px;
        height:5px;
        border:1px solid #999;
        border-radius:50%;
    }
    .panel-tabs{
        height:26px;
        display:flex;
    }
    .panel-tab{
        width:40px;
        display:flex;
        align-items:center;
        justify-content:center;
        background-color:#d5d5d5;
        border:1px solid #888;
        border-left:0;
    }
    .panel-tab.current{
        width:41px;
        padding-left:2px;
        background-color:#f6f6f6;
        border-bottom-color:#f6f6f6;
    }
    .more{
        margin-left:1px;
    }
    .filter{
        width:219px;
        height:26px;
        margin-left:4px;
        padding:4px 2px;
        border:1px solid #bbb;
    }
    .tree-wrap{
        height:768px;
        display:flex;
    }
    .tree{
        width:211px;
        overflow:hidden;
    }
    .root, .node{
        height:22px;
        display:flex;
        align-items:center;
    }
    .root{
        padding-left:4px;
        gap:4px;
        letter-spacing:-.3px;
    }
    .node .icon{
        margin-right:5px;
    }
    .arrow{
        width:26px;
        padding-left:9px;
    }
    .arrow i{
        display:block;
        width:0;
        margin-top:-3px;
        border:4px solid transparent;
        border-left:5px solid #555;
        border-right:0;
    }
    .vbar{
        width:15px;
        display:flex;
        flex-direction:column;
        background-color:#efefef;
    }
    .vthumb{
        height:284px;
        margin-bottom:auto;
        background-color:#cdcdcd;
    }
    .hbar{
        height:16px;
        display:flex;
        background-color:#efefef;
        margin-right:4px;
    }
    .hthumb{
        width:124px;
        margin:0 52px 0 1px;
        background-color:#cdcdcd;
    }

    .viewport{
        position:relative;
        background-color:#fff;
    }
    .scene{
        display:block;
    }
    .watermark{
        font-family:"Liberation Serif", serif;
        font-size:70px;
        letter-spacing:0;
        text-anchor:middle;
        fill:#fff;
        fill-opacity:.72;
    }
    .triad text{
        font-size:9px;
        font-weight:700;
    }
    .hud{
        position:absolute;
        top:-17px;
        left:649px;
        display:flex;
        align-items:center;
    }
    .hud .icon{
        opacity:.85;
    }
    .doc-win{
        position:absolute;
        top:-16px;
        right:6px;
        display:flex;
        color:#999;
    }
    .handle{
        position:absolute;
        top:402px;
        left:0;
        width:8px;
        height:39px;
        display:flex;
        align-items:center;
        background-color:#f6f6f6;
        border:1px solid #888;
        border-left:0;
    }
    .taskpane{
        position:absolute;
        top:54px;
        right:0;
        width:26px;
        border:1px solid #999;
        border-bottom:0;
    }
    .taskpane div{
        height:24px;
        display:flex;
        align-items:center;
        justify-content:center;
        background-color:#d5d5d5;
        border-bottom:1px solid #999;
    }
    .taskpane div.current{
        background-color:#fff;
    }

    .bottom-tabs{
        height:16px;
        flex:none;
        padding-left:59px;
        display:flex;
        border-top:1px solid #777;
        border-bottom:1px solid #777;
        line-height:12px;
    }
    .nav{
        width:65px;
        display:flex;
        background-color:#aaa;
    }
    .sheet{
        display:flex;
        align-items:flex-start;
        justify-content:center;
        background-color:#d5d5d5;
        border-right:1px solid #777;
    }
    .sheet.current{
        width:57px;
        padding-left:3px;
        background-color:#fff;
        font-weight:700;
    }
    .sheet.views{
        width:68px;
    }
    .sheet.motion{
        width:108px;
        padding-right:9px;
    }
    .status{
        height:18px;
        flex:none;
        display:flex;
        align-items:center;
        padding-left:1px;
    }
    .product{
        width:1633px;
    }
    .mode{
        width:179px;
    }
    .units{
        width:55px;
    }
    .up{
        margin-right:27px;
        border:3px solid transparent;
        border-bottom:4px solid #333;
        border-top:0;
    }

    .taskbar{
        height:40px;
        flex:none;
        display:flex;
        background-color:#101010;
        color:#fff;
    }
    .start{
        width:48px;
        display:flex;
        align-items:center;
        justify-content:center;
    }
    .type-here{
        width:288px;
        padding-left:11px;
        display:flex;
        align-items:center;
        gap:10px;
        background-color:#f2f2f2;
        border:1px solid #ccc;
        color:#333;
        font-size:15.5px;
        letter-spacing:-.3px;
    }
    .apps{
        margin-left:2px;
        display:flex;
    }
    .app-button{
        width:49px;
        display:flex;
        align-items:center;
        justify-content:center;
        background-position:center bottom;
        background-repeat:no-repeat;
    }
    .running{
        background-image:linear-gradient(#b5b5b5, #b5b5b5);
        background-size:40px 2px;
    }
    .active{
        background-color:#333;
        background-size:49px 2px;
    }
    .tray{
        margin-left:auto;
        padding-right:24px;
        display:flex;
        align-items:center;
    }
    .clock{
        width:67px;
        margin-right:8px;
        display:flex;
        flex-direction:column;
        align-items:center;
        gap:5px;
    }
</style>
